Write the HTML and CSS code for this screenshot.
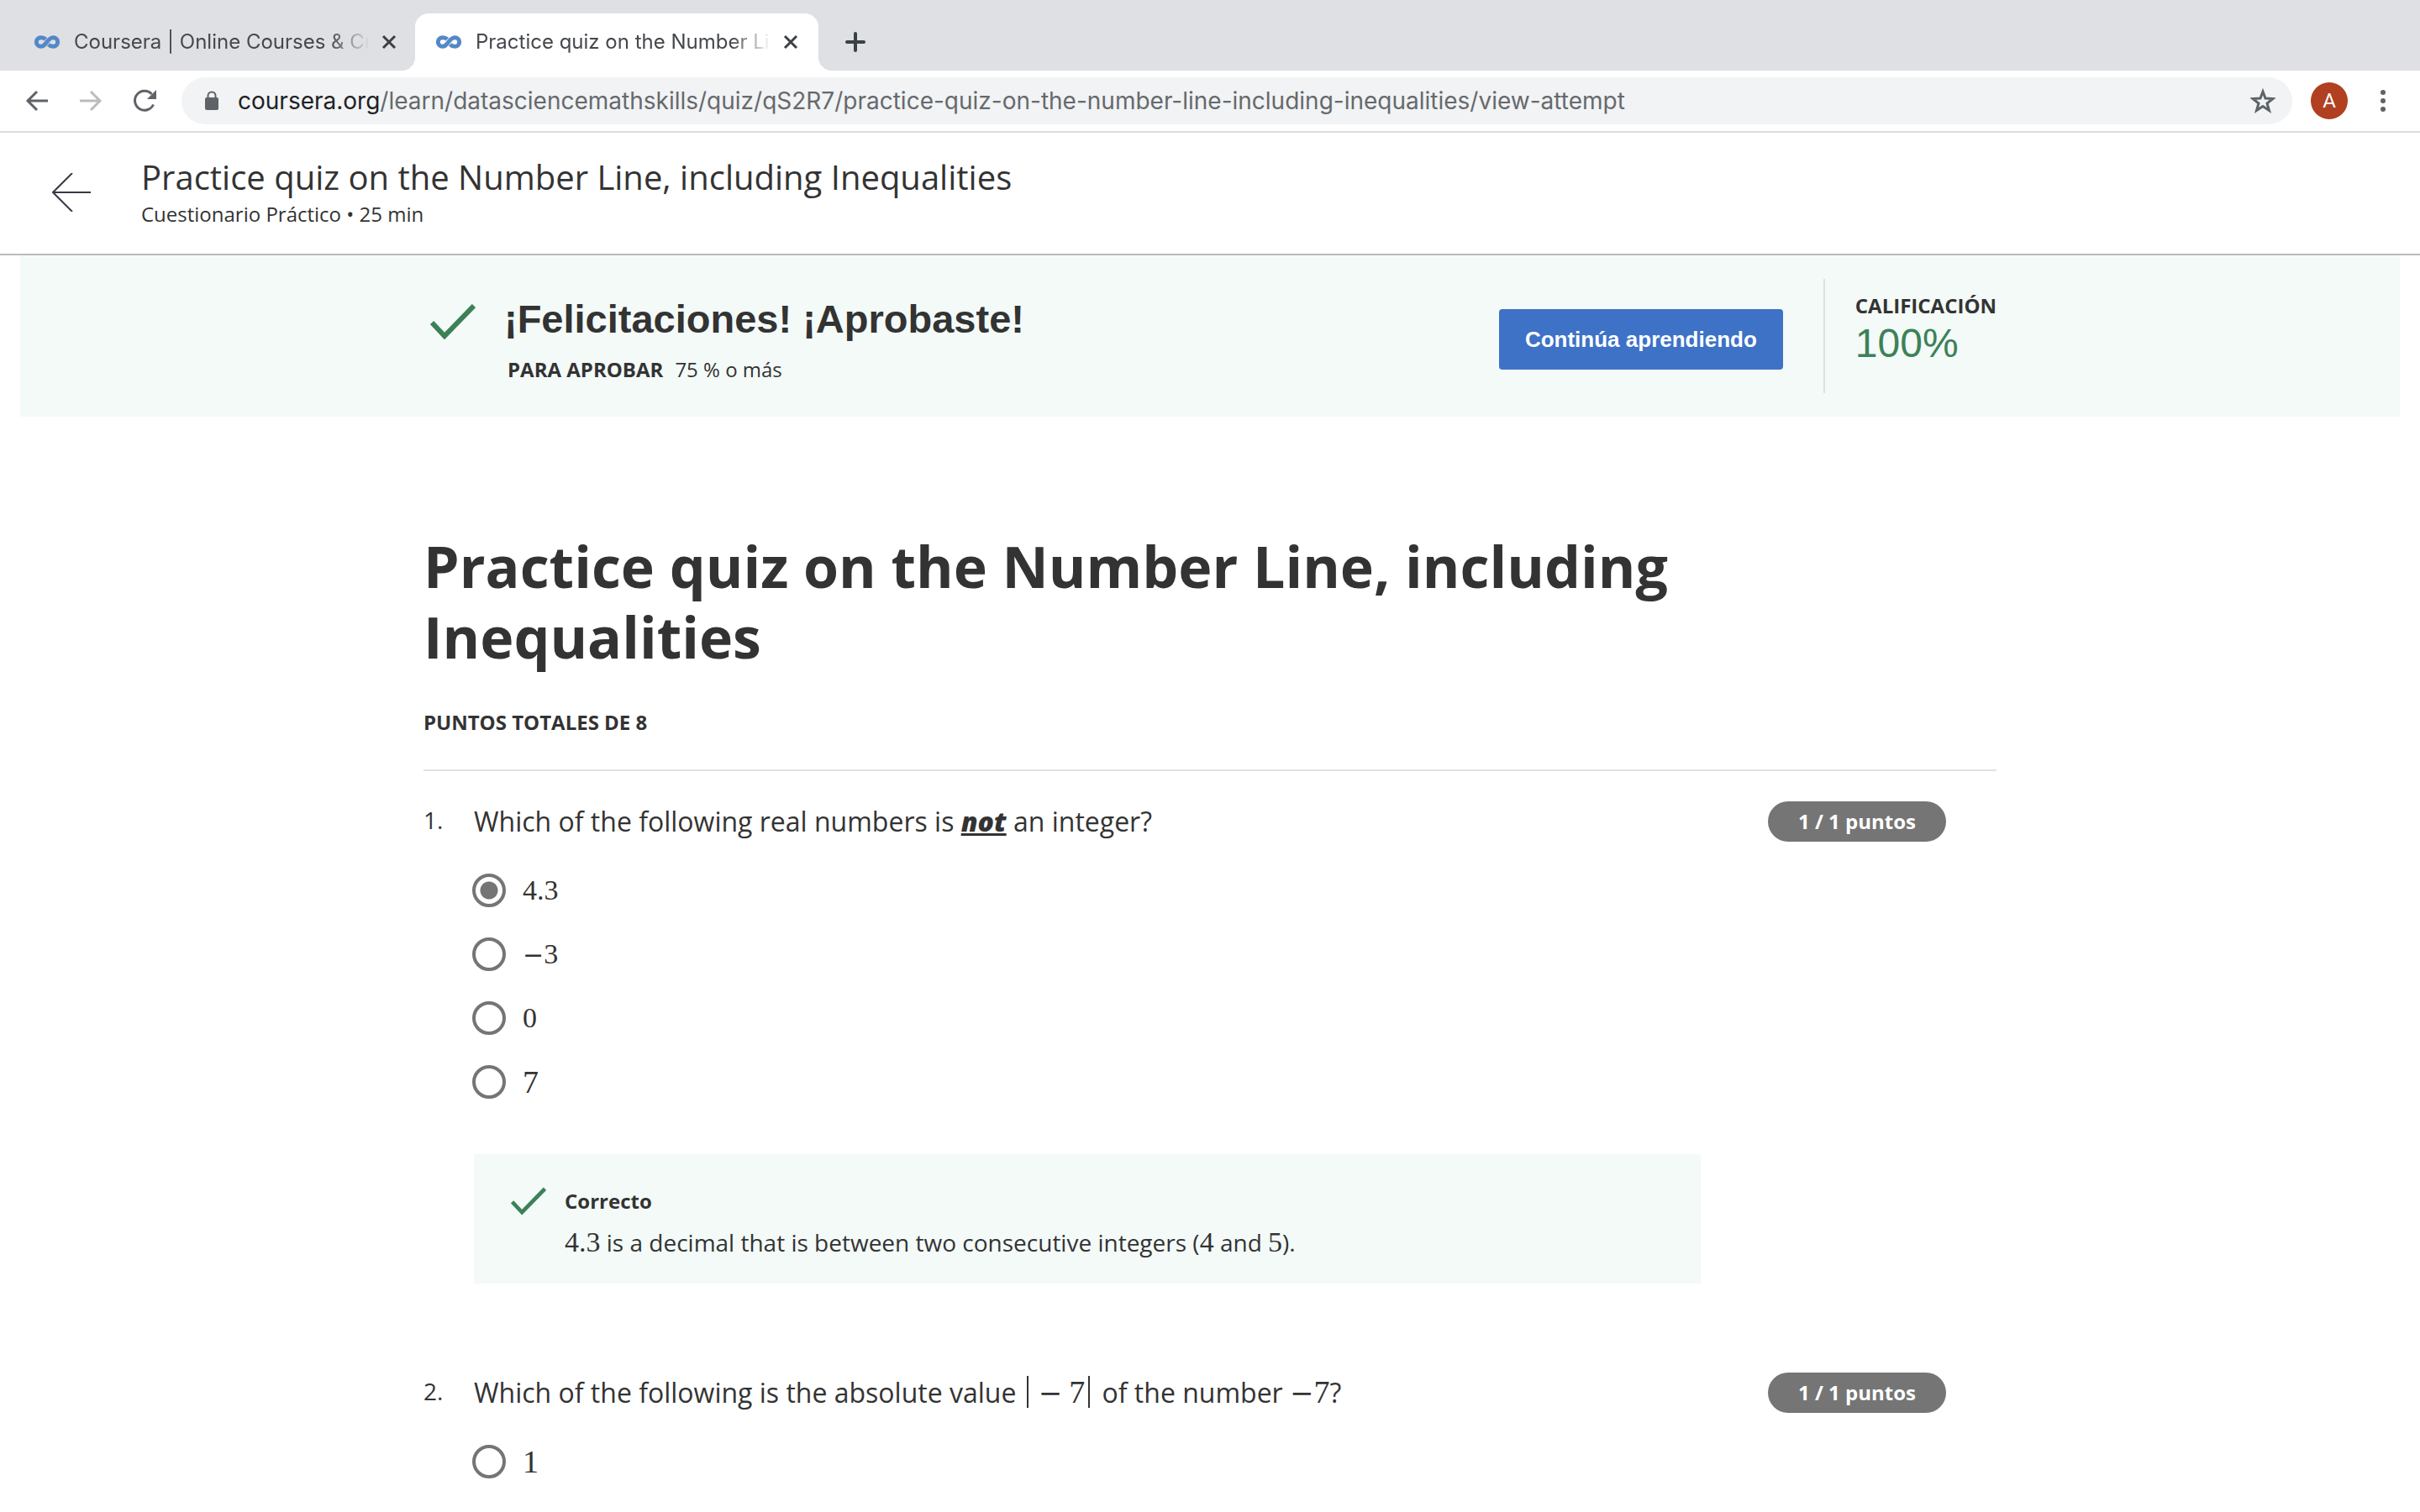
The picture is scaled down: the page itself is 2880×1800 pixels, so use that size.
FILE: index.html
```html
<!DOCTYPE html>
<html lang="es">
<head>
<meta charset="utf-8">
<meta name="viewport" content="width=device-width, initial-scale=1">
<title>Practice quiz on the Number Line, including Inequalities</title>
<link rel="stylesheet" href="styles.css">
</head>
<body>
<svg class="sprite" aria-hidden="true">
  <symbol id="logo" viewBox="0 0 92 48">
    <path d="M41 14C36 9 30 8 24 8a16 16 0 0 0 0 32c20 0 22-32 44-32a16 16 0 0 1 0 32c-7 0-12-2-17-7" fill="none" stroke="#5488c7" stroke-width="15"/>
  </symbol>
  <symbol id="close" viewBox="0 0 18 18">
    <path d="M2 2l14 14M16 2L2 16" fill="none" stroke="currentColor" stroke-width="3"/>
  </symbol>
  <symbol id="check" viewBox="0 0 54 42">
    <path d="M2 22l15 16L52 2" fill="none" stroke="#3d8157" stroke-width="6"/>
  </symbol>
</svg>

<div class="tabs">
  <div class="tab">
    <svg class="favicon"><use href="#logo"/></svg>
    <span class="tab-title">Coursera | Online Courses &amp; Cr</span>
    <button class="icon-button" aria-label="Close tab"><svg class="close"><use href="#close"/></svg></button>
  </div>
  <div class="tab tab-active">
    <svg class="favicon"><use href="#logo"/></svg>
    <span class="tab-title">Practice quiz on the Number Li</span>
    <button class="icon-button" aria-label="Close tab"><svg class="close"><use href="#close"/></svg></button>
  </div>
  <button class="icon-button new-tab" aria-label="New tab">
    <svg width="24" height="24" viewBox="0 0 24 24"><path d="M12 2v20M2 12h20" stroke="#3c4043" stroke-width="4" stroke-linecap="round"/></svg>
  </button>
</div>

<div class="toolbar">
  <div class="nav">
    <button class="icon-button" aria-label="Back"><svg width="28" height="28" viewBox="0 0 28 28"><path d="M27 14H3M14 3L3 14l11 11" fill="none" stroke="#5f6368" stroke-width="3"/></svg></button>
    <button class="icon-button" aria-label="Forward"><svg width="28" height="28" viewBox="0 0 28 28"><path d="M1 14h24M14 3l11 11-11 11" fill="none" stroke="#babcbe" stroke-width="3"/></svg></button>
    <button class="icon-button" aria-label="Reload"><svg width="28" height="28" viewBox="0 0 28 28"><path d="M24.500 18.500A11.500 11.500 0 1 1 22.500 6" fill="none" stroke="#5f6368" stroke-width="3"/><path d="M28 1v11H17z" fill="#5f6368"/></svg></button>
  </div>
  <div class="address">
    <svg width="18" height="24" viewBox="0 0 18 24"><rect x="1" y="8" width="16" height="15" rx="2" fill="#5f6368"/><path d="M4.500 9V6a4.500 4.500 0 0 1 9 0v3" fill="none" stroke="#5f6368" stroke-width="2"/></svg>
    <span class="url"><span class="host">coursera.org</span>/learn/datasciencemathskills/quiz/qS2R7/practice-quiz-on-the-number-line-including-inequalities/view-attempt</span>
    <button class="icon-button" aria-label="Bookmark"><svg width="30" height="30" viewBox="0 0 30 30"><path d="M15 4l3 8 9 .5-7 5.500 2.500 8.500L15 21.500 7.500 26.500 10 18l-7-5.500 9-.5z" fill="none" stroke="#5f6368" stroke-width="3"/></svg></button>
  </div>
  <button class="avatar">A</button>
  <button class="icon-button" aria-label="Menu"><svg width="8" height="28" viewBox="0 0 8 28"><g fill="#5f6368"><circle cx="4" cy="4" r="3"/><circle cx="4" cy="14" r="3"/><circle cx="4" cy="24" r="3"/></g></svg></button>
</div>

<header class="page-header">
  <a class="back" href="#" aria-label="Volver"><svg width="46" height="46" viewBox="0 0 46 46"><path d="M46 23H1M24 0L1 23l23 23" fill="none" stroke="#373a44" stroke-width="2"/></svg></a>
  <div>
    <h2 class="header-title">Practice quiz on the Number Line, including Inequalities</h2>
    <p class="header-meta">Cuestionario Práctico • 25 min</p>
  </div>
</header>

<section class="banner">
  <div class="banner-inner">
    <svg class="banner-check"><use href="#check"/></svg>
    <div class="result">
      <h3 class="result-title">¡Felicitaciones! ¡Aprobaste!</h3>
      <p class="result-rule"><b>PARA APROBAR</b><span>75 % o más</span></p>
    </div>
    <button class="continue">Continúa aprendiendo</button>
    <div class="grade">
      <div class="grade-label">CALIFICACIÓN</div>
      <div class="grade-value">100%</div>
    </div>
  </div>
</section>

<main class="quiz">
  <h1 class="quiz-title">Practice quiz on the Number Line, including Inequalities</h1>
  <p class="total">PUNTOS TOTALES DE 8</p>

  <section class="question">
    <div class="number">1.</div>
    <div class="body">
      <p class="prompt">Which of the following real numbers is <u class="stress">not</u> an integer?</p>
      <div class="options">
        <label class="option"><input type="radio" name="q1" checked><span class="math">4.3</span></label>
        <label class="option"><input type="radio" name="q1"><span class="math"><span class="minus">−</span>3</span></label>
        <label class="option"><input type="radio" name="q1"><span class="math">0</span></label>
        <label class="option"><input type="radio" name="q1"><span class="math math-large">7</span></label>
      </div>
      <div class="feedback">
        <svg class="feedback-check"><use href="#check"/></svg>
        <div>
          <p class="feedback-title">Correcto</p>
          <p class="feedback-text"><span class="math">4.3</span> is a decimal that is between two consecutive integers (<span class="math">4</span> and <span class="math">5</span>).</p>
        </div>
      </div>
    </div>
    <div class="points">1 / 1 puntos</div>
  </section>

  <section class="question">
    <div class="number">2.</div>
    <div class="body">
      <p class="prompt">Which of the following is the absolute value <span class="math math-large absolute"><span class="minus">−</span><span>7</span></span> of the number <span class="math math-large"><span class="minus">−</span>7</span>?</p>
      <div class="options">
        <label class="option"><input type="radio" name="q2"><span class="math math-large">1</span></label>
      </div>
    </div>
    <div class="points">1 / 1 puntos</div>
  </section>
</main>
</body>
</html>
```
FILE: styles.css
```css
* {
  box-sizing: border-box;
}

body {
  margin: 0;
  background: #fff;
  color: #333;
  font: 24px/36px "Open Sans", sans-serif;
}

h1, h2, h3, p {
  margin: 0;
}

svg {
  display: block;
  flex: none;
}

button {
  border: 0;
  padding: 0;
  font: inherit;
  cursor: pointer;
}

.sprite {
  position: absolute;
  width: 0;
  height: 0;
}

.icon-button {
  flex: none;
  background: none;
  color: #3c4043;
}

/* Browser frame */
.tabs {
  display: flex;
  height: 84px;
  padding: 16px 0 0 14px;
  background: #dee0e4;
  font: 24px/36px Inter, sans-serif;
}

.tab {
  display: flex;
  align-items: center;
  width: 480px;
  padding: 0 22px 0 26px;
  color: #45484c;
}

.tab-active {
  position: relative;
  border-radius: 16px 16px 0 0;
  background: #fff;
  padding: 0 24px;
}

.tab-active::before,
.tab-active::after {
  content: "";
  position: absolute;
  bottom: 0;
  width: 16px;
  height: 16px;
}

.tab-active::before {
  right: 100%;
  background: radial-gradient(circle at 0 0, transparent 16px, #fff 16px);
}

.tab-active::after {
  left: 100%;
  background: radial-gradient(circle at 100% 0, transparent 16px, #fff 16px);
}

.favicon {
  width: 32px;
  height: 16px;
  margin-right: 16px;
}

.tab-title {
  flex: 1;
  min-width: 0;
  margin-right: 14px;
  white-space: nowrap;
  mask-image: linear-gradient(to left, transparent, #000 48px);
}

.close {
  width: 18px;
  height: 18px;
}

.new-tab {
  margin-left: 32px;
}

.toolbar {
  display: flex;
  align-items: center;
  height: 74px;
  padding: 0 40px 0 30px;
  border-bottom: 2px solid #dadce0;
}

.nav {
  display: flex;
  gap: 36px;
}

.address {
  display: flex;
  flex: 1;
  align-items: center;
  height: 56px;
  margin: 0 22px 0 30px;
  padding: 0 20px 0 27px;
  border-radius: 28px;
  background: #f1f3f4;
  color: #66696d;
  font: 28px/40px Inter, sans-serif;
}

.url {
  flex: 1;
  margin-left: 22px;
  white-space: nowrap;
}

.host {
  color: #202124;
}

.avatar {
  width: 44px;
  height: 44px;
  margin-right: 38px;
  border-radius: 50%;
  background: #b04020;
  color: #fff;
  font: 24px/44px Roboto, sans-serif;
}

/* Course header */
.page-header {
  display: flex;
  align-items: center;
  gap: 60px;
  height: 146px;
  padding: 0 62px 2px;
  border-bottom: 2px solid #bbb;
}

.header-title {
  font-size: 40px;
  font-weight: 400;
  line-height: 52px;
}

.header-meta {
  line-height: 36px;
}

/* Result banner */
.banner {
  margin: 0 24px;
  padding: 28px 48px;
  background: #f3faf8;
}

.banner-inner {
  display: flex;
  align-items: center;
  max-width: 1872px;
  margin: 0 auto;
  padding-left: 8px;
}

.banner-check {
  width: 54px;
  height: 42px;
  margin: 0 34px 34px 0;
}

.result {
  flex: 1;
  padding-top: 8px;
}

.result-title {
  font: bold 47px/60px "Liberation Sans", sans-serif;
}

.result-rule {
  display: flex;
  gap: 14px;
  padding: 12px 0 0 4px;
}

.continue {
  height: 72px;
  margin-top: 8px;
  padding: 0 31px;
  border-radius: 4px;
  background: #3d72c6;
  color: #fff;
  font: bold 26px/36px "Liberation Sans", sans-serif;
}

.grade {
  height: 136px;
  margin-left: 48px;
  padding: 14px 0 0 36px;
  border-left: 2px solid #dde1e1;
}

.grade-label {
  font-weight: 700;
}

.grade-value {
  color: #3d8157;
  font: 48px/54px "Liberation Sans", sans-serif;
}

/* Quiz */
.quiz {
  max-width: 1968px;
  margin: 0 auto;
  padding: 136px 48px 0;
}

.quiz-title {
  max-width: 1600px;
  font-size: 68px;
  line-height: 84px;
}

.total {
  padding: 42px 0 38px;
  border-bottom: 2px solid #e1e1e1;
  font-weight: 700;
}

.question {
  display: flex;
  align-items: flex-start;
  padding-right: 60px;
  margin-bottom: 70px;
}

.number {
  width: 60px;
  padding-top: 38px;
  font-size: 28px;
  line-height: 40px;
}

.body {
  flex: 1;
  min-width: 0;
  padding-top: 36px;
  margin-right: 80px;
}

.prompt {
  font-size: 32px;
  line-height: 48px;
}

.stress {
  font-style: italic;
  font-weight: 800;
}

.math {
  font-family: "Liberation Serif", serif;
  font-size: 34px;
  line-height: 1;
}

.minus {
  font-family: "DejaVu Serif", serif;
  font-size: 30px;
  line-height: 1;
}

.math-large {
  font-size: 38px;
}

.math-large .minus {
  font-size: 34px;
}

.absolute {
  display: inline-flex;
  align-items: baseline;
  gap: 8px;
  margin: 0 6px 0 4px;
  padding: 0 4px 0 12px;
  border: solid #333;
  border-width: 0 2px;
}

.options {
  display: grid;
  gap: 36px;
  margin: 38px 0 66px -2px;
}

.option {
  display: flex;
  align-items: center;
  gap: 20px;
  height: 40px;
}

.option input {
  appearance: none;
  width: 40px;
  height: 40px;
  margin: 0;
  border: 4px solid #757575;
  border-radius: 50%;
}

.option input:checked {
  background: radial-gradient(circle, #757575 10px, transparent 11px);
}

.options:last-child,
.question:last-child {
  margin-bottom: 0;
}

.feedback {
  display: flex;
  gap: 22px;
  padding: 38px 44px 26px;
  background: #f3faf8;
}

.feedback-check {
  width: 42px;
  height: 36px;
}

.feedback-title {
  font-weight: 700;
}

.feedback-text {
  margin-top: 8px;
  font-size: 28px;
  line-height: 46px;
}

.points {
  width: 212px;
  margin-top: 36px;
  border-radius: 24px;
  background: #757575;
  color: #fff;
  font-weight: 700;
  line-height: 48px;
  text-align: center;
}
```
